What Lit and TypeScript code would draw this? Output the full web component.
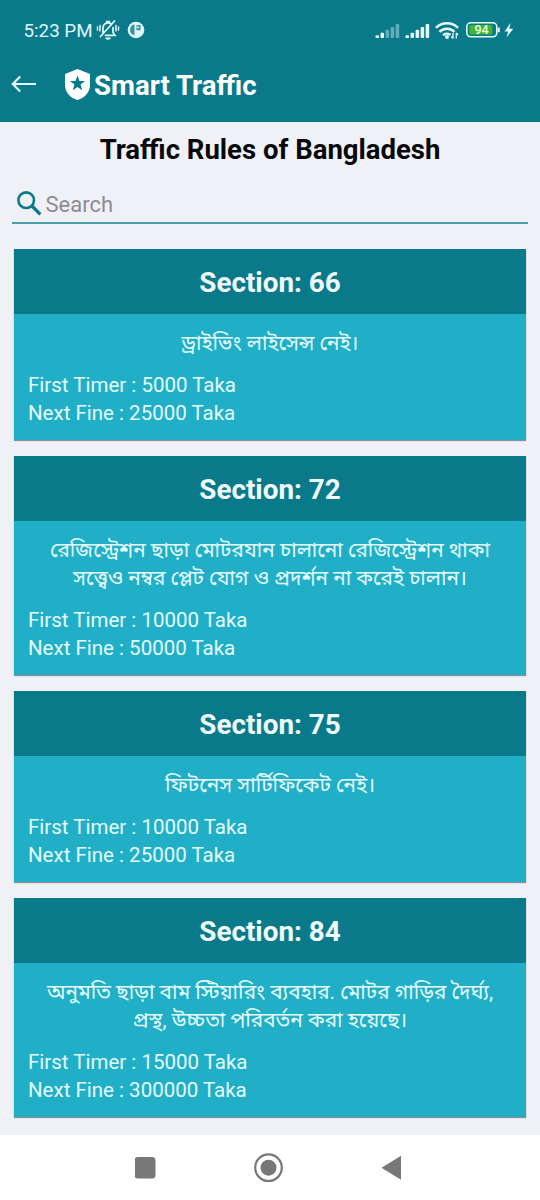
import { LitElement, html, css, svg } from "lit";
import { customElement, property } from "lit/decorators.js";

interface Rule {
  section: string;
  lines: string[];
  first: string;
  next: string;
}

const RULES: Rule[] = [
  { section: "66", lines: ["ড্রাইভিং লাইসেন্স নেই।"], first: "5000", next: "25000" },
  {
    section: "72",
    lines: ["রেজিস্ট্রেশন ছাড়া মোটরযান চালানো রেজিস্ট্রেশন থাকা", "সত্ত্বেও নম্বর প্লেট যোগ ও প্রদর্শন না করেই চালান।"],
    first: "10000",
    next: "50000",
  },
  { section: "75", lines: ["ফিটনেস সার্টিফিকেট নেই।"], first: "10000", next: "25000" },
  {
    section: "84",
    lines: ["অনুমতি ছাড়া বাম স্টিয়ারিং ব্যবহার. মোটর গাড়ির দৈর্ঘ্য,", "প্রস্থ, উচ্চতা পরিবর্তন করা হয়েছে।"],
    first: "15000",
    next: "300000",
  },
];

@customElement("rule-card")
export class RuleCard extends LitElement {
  @property({ attribute: false }) rule!: Rule;

  static styles = css`
    :host {
      display: block;
      background: #21afc7;
      color: #e4fbff;
      box-shadow: 0 1px 1px rgba(0, 0, 0, 0.4);
    }
    .head {
      height: 65px;
      line-height: 68px;
      background: #0a7a8a;
      color: #f0fafc;
      text-align: center;
      font-size: 27.8px;
      font-weight: 700;
    }
    .body {
      padding: 14px;
      font-size: 20.5px;
      line-height: 28px;
    }
    .text {
      margin-bottom: 14px;
      text-align: center;
      font-size: 20.75px;
    }
    .line {
      height: 28px;
      line-height: 30px;
      white-space: nowrap;
    }
    .fine {
      height: 28px;
      line-height: 30px;
    }
  `;

  render() {
    const r = this.rule;
    return html`
      <div class="head">Section: ${r.section}</div>
      <div class="body">
        <div class="text">${r.lines.map((l) => html`<div class="line">${l}</div>`)}</div>
        <div class="fine">First Timer : ${r.first} Taka</div>
        <div class="fine">Next Fine : ${r.next} Taka</div>
      </div>
    `;
  }
}

const signal = (strong: number) => svg`
  ${[3, 5.5, 8.5, 11.5, 14.5].map(
    (h, i) => svg`<rect x=${i * 5.2} y=${15 - h} width="3.6" height=${h} rx="1" fill="#e6fbff" opacity=${i < strong ? 1 : 0.4}></rect>`
  )}`;

@customElement("status-bar")
export class StatusBar extends LitElement {
  static styles = css`
    :host {
      display: flex;
      align-items: center;
      height: 60px;
      padding: 0 25px 0 23.5px;
      box-sizing: border-box;
      color: #dff8fb;
    }
    .time {
      font-size: 18.8px;
      line-height: 24px;
      width: 72px;
      white-space: nowrap;
      padding-top: 2px;
    }
    .icon {
      display: block;
      flex: none;
    }
    .badge {
      margin-left: 7px;
    }
    .space {
      flex: 1;
    }
  `;

  render() {
    return html`
      <span class="time">5:23 PM</span>
      <svg class="icon" width="24" height="22" viewBox="0 0 24 22" fill="none" stroke="#dff8fb" stroke-width="1.7" stroke-linecap="round">
        <path d="M7 13.500V9a5 5 0 0 1 7.800-4.300M17 8.500v5l2 2.800H9.500M10.500 2.500h3M4.500 17.500 18.500 2"></path>
        <path d="M1.500 8v3M4 6.500v5.500M20 6.500v5.500M22.500 8v3" stroke-width="1.500"></path>
        <path d="M9.300 18.500a2.700 2.200 0 0 0 5.400 0z" fill="#dff8fb" stroke="none"></path>
      </svg>
      <svg class="icon badge" width="18" height="18" viewBox="0 0 18 18">
        <circle cx="9" cy="9" r="8.300" fill="#dff8fb"></circle>
        <path d="M4 5.500Q5 3.500 7.500 3.500V14.500Q3 13 3 9Q3 7 4 5.500zM9.500 4h4v5.200h-4z" fill="#0a7a8a" fill-opacity=".8"></path>
        <circle cx="11" cy="6.300" r="1" fill="#dff8fb"></circle>
      </svg>
      <span class="space"></span>
      <svg class="icon" width="140" height="22" viewBox="0 0 140 22">
        <g transform="translate(0.500 4.500) scale(.97 .97)">${signal(2)}</g>
        <g transform="translate(30.500 4.500) scale(.97 .97)">${signal(5)}</g>
        <g fill="none" stroke="#e6fbff" stroke-width="2.500">
          <path d="M61 8.800a15.500 15.500 0 0 1 22 0M64.500 12.800a10.500 10.500 0 0 1 15 0M68 16.300a5.500 5.500 0 0 1 7.500-.3"></path>
        </g>
        <circle cx="72" cy="18" r="2" fill="#e6fbff"></circle>
        <path d="M78 14v5.500M76.300 17.500l1.700 2M81.300 19.500v-5.500M83 16 81.300 14" stroke="#e6fbff" stroke-width="1.300" fill="none"></path>
        <rect x="91.800" y="3.800" width="30" height="14" rx="4" fill="none" stroke="#e6fbff" stroke-width="1.600"></rect>
        <rect x="94.300" y="6" width="23" height="9.600" rx="1.500" fill="#43b72a"></rect>
        <path d="M123.800 8.600v4.600" stroke="#e6fbff" stroke-width="2"></path>
        <text x="106.500" y="15.300" text-anchor="middle" font-size="12.500" font-weight="500" fill="#eaffea">94</text>
        <path d="M135.500 4 129.500 12.500h3.700L131.500 18.500l6.800-8.800h-4z" fill="#e6fbff"></path>
      </svg>
    `;
  }
}

@customElement("app-root")
export class AppRoot extends LitElement {
  static styles = css`
    :host {
      display: flex;
      flex-direction: column;
      height: 1200px;
      overflow: hidden;
      background: #f0f0f7;
      font-family: Roboto, "Noto Sans Bengali", "Noto Sans", sans-serif;
    }
    .top {
      flex: none;
      height: 122px;
      background: #0a7a8a;
    }
    .bar {
      display: flex;
      align-items: center;
      height: 48px;
      padding-left: 11px;
      color: #fff;
    }
    .shield {
      margin-left: 28px;
      margin-right: 4px;
    }
    .brand {
      font-size: 27.6px;
      font-weight: 700;
      line-height: 32px;
      padding-top: 4px;
    }
    .title {
      margin: 0;
      padding-top: 12px;
      height: 55px;
      box-sizing: border-box;
      text-align: center;
      font-size: 27.5px;
      line-height: 32px;
      font-weight: 700;
      color: #08080c;
    }
    .search {
      display: flex;
      align-items: center;
      gap: 4px;
      height: 47px;
      box-sizing: border-box;
      margin: 0 12px;
      padding: 6px 3.5px 0;
      border-bottom: 2px solid #4a9fab;
      font-size: 22px;
      color: #8c8c91;
    }
    .hint {
      padding-top: 3px;
    }
    .list {
      flex: 1;
      display: flex;
      flex-direction: column;
      gap: 16px;
      padding: 25px 14px 0;
    }
    .nav {
      flex: none;
      height: 65px;
      background: #fff;
      display: flex;
      align-items: center;
      justify-content: center;
    }
    .icon {
      display: block;
      flex: none;
    }
  `;

  render() {
    return html`
      <header class="top">
        <status-bar></status-bar>
        <div class="bar">
          <svg class="icon" width="26" height="20" viewBox="0 0 26 20" fill="none" stroke="#e6fbff" stroke-width="2.200">
            <path d="M25 10H2M9.200 2.500 1.800 10l7.400 7.500"></path>
          </svg>
          <svg class="icon shield" width="25" height="31" viewBox="0 0 25 31">
            <path
              fill="#fff"
              fill-rule="evenodd"
              d="M12.500 0 25 5v11c0 7-5 12.800-12.500 15C5 28.800 0 23 0 16V5zM12.500 6.500l-2 5.400-5.600.2 4.500 3.500-1.600 5.600 4.700-3.300 4.700 3.300-1.600-5.600 4.500-3.500-5.600-.2z"
            ></path>
          </svg>
          <span class="brand">Smart Traffic</span>
        </div>
      </header>
      <h1 class="title">Traffic Rules of Bangladesh</h1>
      <div class="search">
        <svg class="icon" width="26" height="26" viewBox="0 0 26 26" fill="none" stroke="#0a7a8a">
          <circle cx="10.200" cy="10.200" r="7.800" stroke-width="2.600"></circle>
          <path d="m16 16 8.300 8.300" stroke-width="3.300"></path>
        </svg>
        <span class="hint">Search</span>
      </div>
      <main class="list">${RULES.map((r) => html`<rule-card .rule=${r}></rule-card>`)}</main>
      <nav class="nav">
        <svg class="icon" width="270" height="30" viewBox="0 0 270 30" fill="#787878">
          <rect x="-0.500" y="4" width="21" height="21.500" rx="3.500"></rect>
          <circle cx="133.500" cy="14.700" r="13.300" fill="none" stroke="#787878" stroke-width="2.200"></circle>
          <circle cx="133.500" cy="14.700" r="8"></circle>
          <path d="M246.500 14.700 266 2.700v24z"></path>
        </svg>
      </nav>
    `;
  }
}
